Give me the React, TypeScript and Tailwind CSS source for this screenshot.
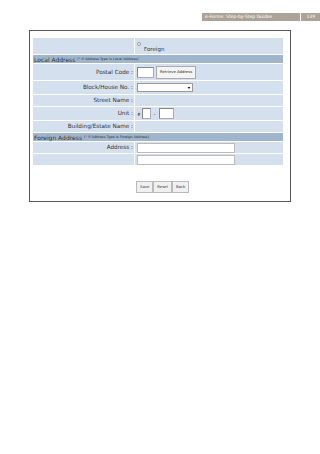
import React from "react";

// Address form page from the e-Forms guide

const font = { fontFamily: '"DejaVu Sans", Verdana, sans-serif' };

function Row({
  label,
  h = "h-[14px]",
  children,
}: {
  label?: string;
  h?: string;
  children?: React.ReactNode;
}) {
  return (
    <div className={`flex ${h} border-b border-white`}>
      <div className="w-[102px] shrink-0 bg-[#d4e0ee] border-r border-white flex items-center justify-end pr-[1px] text-[5.7px] text-[#333]">
        {label ? `${label} :` : ""}
      </div>
      <div className="flex-1 bg-[#d4e0ee] flex items-center pl-[2px]">{children}</div>
    </div>
  );
}

function Header({ title, note }: { title: string; note: string }) {
  return (
    <div className="flex items-center h-[9px] bg-[#9fb5ce] border-b border-white pl-[1px] text-[#333]">
      <span className="text-[6px]">{title}</span>
      <span className="text-[3.5px] ml-[2px] mt-[1px]">
        (<span className="text-[#d33]">*</span> if Address Type is {note})
      </span>
    </div>
  );
}

function Box({ w }: { w: string }) {
  return <div className={`${w} h-[11px] bg-white border border-[#aab] border-t-[#888] border-l-[#888]`} />;
}

function Btn({ label }: { label: string }) {
  return (
    <div className="h-[12px] px-[3px] flex items-center bg-[#f0f0f0] border border-[#bbb] text-[3.8px] text-[#333]">
      {label}
    </div>
  );
}

export default function App() {
  return (
    <div className="w-[320px] h-[454px] bg-white relative" style={font}>
      {/* page header */}
      <div className="flex justify-end pt-[13px]">
        <div className="h-[8px] w-[118px] bg-[#aba398] flex items-center text-white text-[4.5px]">
          <span className="pl-[3px] flex-1">e-Forms: Step-by-Step Guides</span>
          <span className="h-full w-px bg-white" />
          <span className="px-[5px]">139</span>
        </div>
      </div>

      {/* screenshot frame */}
      <div className="ml-[29px] mt-[9px] w-[262px] h-[172px] border border-[#555] pl-[3px] pr-[7px] pt-[7px]">
        <Row h="h-[17px]">
          <div className="flex items-start gap-[3px] pt-[2px]">
            <div className="w-[4px] h-[4px] rounded-full border border-[#999] bg-white mt-[1px]" />
            <span className="text-[5.5px] text-[#333] mt-[4px]">Foreign</span>
          </div>
        </Row>
        <Header title="Local Address" note="Local Address" />
        <Row label="Postal Code" h="h-[17px]">
          <Box w="w-[17px]" />
          <div className="ml-[2px] h-[13px] px-[3px] flex items-center bg-[#f4f4f4] border border-[#aaa] text-[3.8px] text-[#222]">
            Retrieve Address
          </div>
        </Row>
        <Row label="Block/House No." h="h-[14px]">
          <div className="w-[56px] h-[9px] bg-white border border-[#999] flex justify-end items-center pr-[1px]">
            <svg width="4" height="4" viewBox="0 0 4 4">
              <path d="M0.5 1 L3.5 1 L2 3 Z" fill="#222" />
            </svg>
          </div>
        </Row>
        <Row label="Street Name" h="h-[12px]" />
        <Row label="Unit" h="h-[14px]">
          <span className="text-[4.5px] text-[#222] mt-[3px]">#</span>
          <div className="ml-[1px]">
            <Box w="w-[9px]" />
          </div>
          <span className="text-[5px] text-[#222] mx-[3px] mt-[3px]">-</span>
          <Box w="w-[15px]" />
        </Row>
        <Row label="Building/Estate Name" h="h-[12px]" />
        <Header title="Foreign Address" note="Foreign Address" />
        <Row label="Address" h="h-[12px]">
          <div className="w-[98px] h-[10px] bg-white border border-[#bbb]" />
        </Row>
        <Row h="h-[12px]">
          <div className="w-[98px] h-[10px] bg-white border border-[#bbb]" />
        </Row>
        <div className="flex pl-[103px] mt-[15px]">
          <Btn label="Save" />
          <Btn label="Reset" />
          <Btn label="Back" />
        </div>
      </div>
    </div>
  );
}
